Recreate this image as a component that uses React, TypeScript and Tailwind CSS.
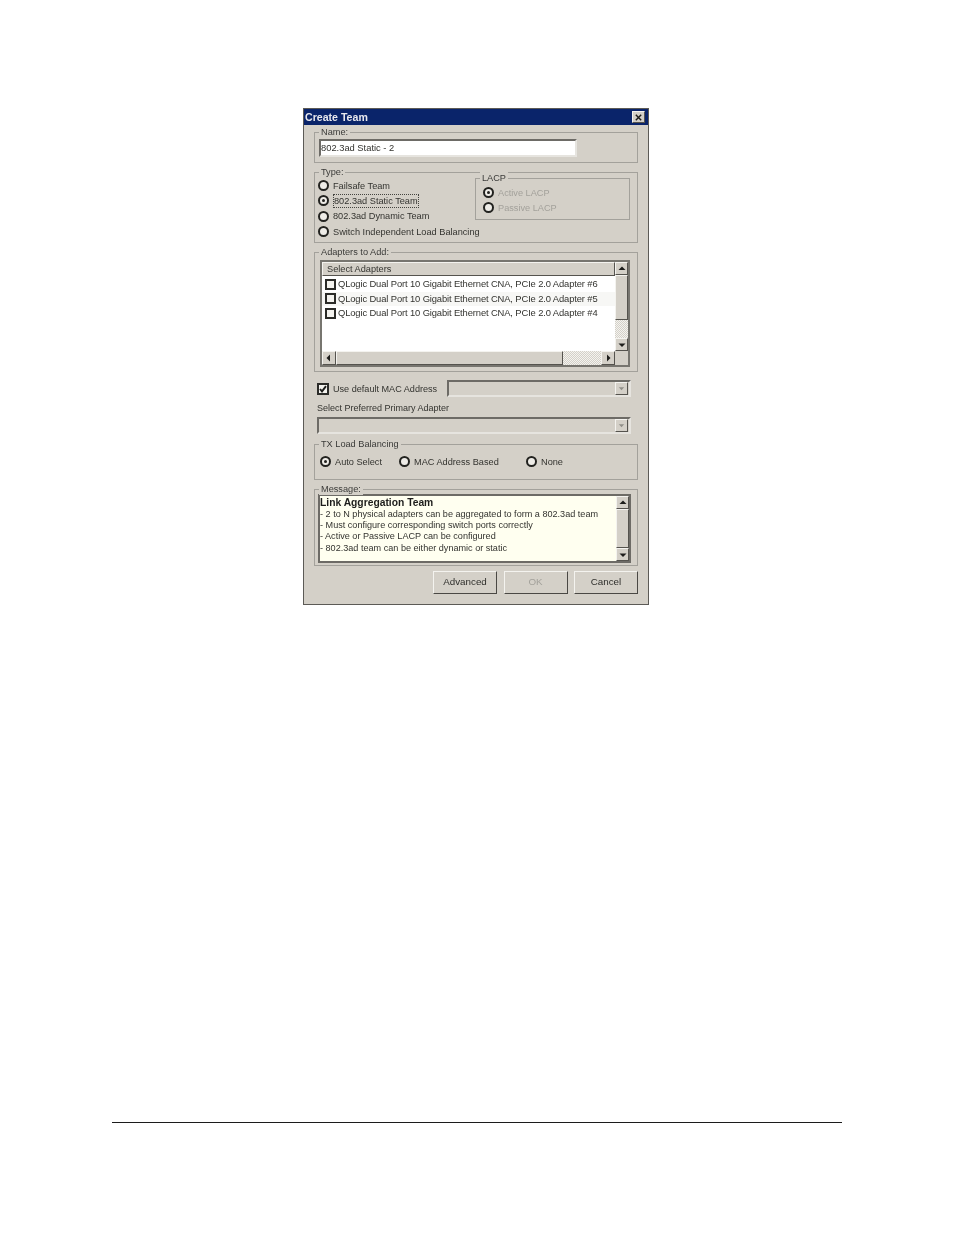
import { ReactNode } from "react";

const face = "bg-[#d4d0c8]";
const raised = "border border-t-[#f4f3ef] border-l-[#f4f3ef] border-r-[#55534e] border-b-[#55534e]";
const sunken = "border-2 border-t-[#6d6b66] border-l-[#6d6b66] border-r-[#e6e4df] border-b-[#e6e4df]";
const track = "bg-[repeating-conic-gradient(#d4d0c8_0_25%,#f4f3ef_0_50%)] bg-[length:2px_2px]";

function Group({ legend, className, children }: { legend: string; className: string; children: ReactNode }) {
  return (
    <section className={`relative border border-[#a3a19b] ${className}`}>
      <span className={`absolute left-[4px] top-[-7px] px-[2px] text-[9.2px] leading-[12px] text-[#3a3a38] ${face}`}>{legend}</span>
      {children}
    </section>
  );
}

function Radio({ label, checked, disabled, boxed }: { label: string; checked?: boolean; disabled?: boolean; boxed?: boolean }) {
  return (
    <div className="flex h-[15.3px] items-center gap-[4px]">
      <span className="flex h-[11px] w-[11px] shrink-0 items-center justify-center rounded-full border-2 border-[#22221f] bg-[#eeece7]">
        {checked ? <span className="h-[3px] w-[3px] rounded-full bg-[#22221f]" /> : null}
      </span>
      <span
        className={`whitespace-nowrap text-[9.2px] leading-[12px] ${disabled ? "text-[#a3a19b]" : "text-[#33332f]"} ${boxed ? "border border-dotted border-[#44443f]" : ""}`}
      >
        {label}
      </span>
    </div>
  );
}

function Arrow({ dir, className = "" }: { dir: "up" | "down" | "left" | "right"; className?: string }) {
  const points = {
    up: "1.5,6 8.5,6 5,2.5",
    down: "1.5,3.5 8.5,3.5 5,7",
    left: "6,1.5 6,8.5 2.5,5",
    right: "4,1.5 4,8.5 7.5,5"
  }[dir];
  return (
    <span className={`flex shrink-0 items-center justify-center ${face} ${raised} ${className}`}>
      <svg viewBox="0 0 10 10" className="h-[10px] w-[10px]">
        <polygon points={points} fill="#1d1d1b" />
      </svg>
    </span>
  );
}

function Combo({ className }: { className: string }) {
  return (
    <div className={`flex items-center justify-end pr-[1px] ${sunken} ${face} ${className}`}>
      <span className={`flex h-[13px] w-[13px] items-center justify-center ${raised}`}>
        <svg viewBox="0 0 10 10" className="h-[9px] w-[9px]">
          <polygon points="2,3.5 8,3.5 5,7" fill="#918f89" />
        </svg>
      </span>
    </div>
  );
}

function AdapterRow({ label, tint }: { label: string; tint?: boolean }) {
  return (
    <div className={`flex h-[14.5px] items-center gap-[2px] pl-[3px] ${tint ? "bg-[#f7f7f5]" : "bg-white"}`}>
      <span className="h-[11px] w-[11px] shrink-0 border-2 border-[#2b2b28] bg-[#f4f3ef]" />
      <span className="whitespace-nowrap text-[9.4px] leading-[12px] tracking-[-0.12px] text-[#33332f]">{label}</span>
    </div>
  );
}

function DialogButton({ label, disabled }: { label: string; disabled?: boolean }) {
  return (
    <button
      className={`h-[23px] w-[64px] border border-t-[#f4f3ef] border-l-[#f4f3ef] border-r-[#4a4844] border-b-[#4a4844] text-[9.8px] ${face} ${disabled ? "text-[#a3a19b]" : "text-[#2e2e2b]"}`}
    >
      {label}
    </button>
  );
}

export default function App() {
  return (
    <div className="flex h-[1235px] w-[954px] flex-col bg-white pt-[108px] font-['Liberation_Sans',Arial,sans-serif]">
      <div className={`ml-[303px] flex h-[497px] w-[346px] flex-col border border-[#5c5a56] blur-[0.4px] ${face}`}>
        <header className="flex h-[16px] items-center justify-between bg-[#0a246a] pl-[1px] pr-[3px]">
          <span className="text-[10.6px] font-bold leading-[12px] text-[#e8e8ee]">Create Team</span>
          <span className={`flex h-[12px] w-[13px] items-center justify-center ${face} ${raised}`}>
            <svg viewBox="0 0 10 10" className="h-[9px] w-[9px]">
              <path d="M2 2 L8 8 M8 2 L2 8" stroke="#1d1d1b" strokeWidth="1.6" />
            </svg>
          </span>
        </header>

        <div className="flex flex-col px-[10px] pt-[7px]">
          <Group legend="Name:" className="h-[31px] pl-[4px] pt-[6px]">
            <div className={`flex h-[18px] w-[258px] items-center bg-white ${sunken}`}>
              <span className="text-[9.35px] leading-[12px] text-[#33332f]">802.3ad Static - 2</span>
            </div>
          </Group>

          <Group legend="Type:" className="mt-[9px] flex h-[71px] justify-between pl-[3px] pr-[7px] pt-[1px]">
            <div className="flex w-[150px] shrink-0 flex-col pt-[4px]">
              <Radio label="Failsafe Team" />
              <Radio label="802.3ad Static Team" checked boxed />
              <Radio label="802.3ad Dynamic Team" />
              <Radio label="Switch Independent Load Balancing" />
            </div>
            <Group legend="LACP" className="mt-[4px] h-[42px] w-[155px] shrink-0 pl-[7px] pt-[6px]">
              <Radio label="Active LACP" checked disabled />
              <Radio label="Passive LACP" disabled />
            </Group>
          </Group>

          <Group legend="Adapters to Add:" className="mt-[9px] h-[120px] pl-[5px] pt-[7px]">
            <div className="flex h-[107px] w-[310px] flex-col border-2 border-[#77756f] bg-white">
              <div className="flex min-h-0 flex-1">
                <div className="flex min-w-0 flex-1 flex-col">
                  <div className={`flex h-[14px] items-center pl-[4px] text-[9.2px] leading-[12px] text-[#33332f] ${face} ${raised}`}>
                    Select Adapters
                  </div>
                  <div className="pt-[1px]">
                    <AdapterRow label="QLogic Dual Port 10 Gigabit Ethernet CNA, PCIe 2.0 Adapter #6" />
                    <AdapterRow label="QLogic Dual Port 10 Gigabit Ethernet CNA, PCIe 2.0 Adapter #5" tint />
                    <AdapterRow label="QLogic Dual Port 10 Gigabit Ethernet CNA, PCIe 2.0 Adapter #4" />
                  </div>
                </div>
                <div className="flex w-[13px] shrink-0 flex-col">
                  <Arrow dir="up" className="h-[13px]" />
                  <div className={`h-[45px] shrink-0 ${face} ${raised}`} />
                  <div className={`flex-1 ${track}`} />
                  <Arrow dir="down" className="h-[13px]" />
                </div>
              </div>
              <div className="flex h-[14px] shrink-0">
                <Arrow dir="left" className="w-[14px]" />
                <div className={`w-[227px] ${face} ${raised}`} />
                <div className={`flex-1 ${track}`} />
                <Arrow dir="right" className="w-[14px]" />
                <div className={`w-[13px] ${face}`} />
              </div>
            </div>
          </Group>

          <div className="mt-[8px] flex h-[17px] items-center pl-[3px]">
            <span className="flex h-[12px] w-[12px] shrink-0 items-center justify-center border-2 border-[#2b2b28] bg-[#f4f3ef]">
              <svg viewBox="0 0 8 8" className="h-[8px] w-[8px]">
                <path d="M1 4 L3 6.4 L7 1.2" fill="none" stroke="#1d1d1b" strokeWidth="1.9" />
              </svg>
            </span>
            <span className="ml-[4px] w-[114px] whitespace-nowrap text-[9.1px] leading-[12px] text-[#33332f]">Use default MAC Address</span>
            <Combo className="h-[17px] w-[184px]" />
          </div>
          <div className="mt-[5px] h-[12px] pl-[3px] text-[9px] leading-[12px] text-[#33332f]">Select Preferred Primary Adapter</div>
          <Combo className="ml-[3px] mt-[3px] h-[17px] w-[314px]" />

          <Group legend="TX Load Balancing" className="mt-[10px] flex h-[36px] items-center pl-[5px]">
            <div className="w-[79px]">
              <Radio label="Auto Select" checked />
            </div>
            <div className="w-[127px]">
              <Radio label="MAC Address Based" />
            </div>
            <Radio label="None" />
          </Group>

          <Group legend="Message:" className="mt-[9px] h-[77px] pl-[3px] pt-[4px]">
            <div className="flex h-[69px] w-[313px] border-2 border-[#6d6b66] bg-[#fffff0]">
              <div className="min-w-0 flex-1 pt-[1px] text-[9.1px] leading-[11.2px] text-[#33332f]">
                <p className="text-[10.3px] font-bold leading-[12px] text-[#1d1d1b]">Link Aggregation Team</p>
                <p>- 2 to N physical adapters can be aggregated to form a 802.3ad team</p>
                <p>- Must configure corresponding switch ports correctly</p>
                <p>- Active or Passive LACP can be configured</p>
                <p>- 802.3ad team can be either dynamic or static</p>
              </div>
              <div className="flex w-[13px] shrink-0 flex-col">
                <Arrow dir="up" className="h-[13px]" />
                <div className={`flex-1 ${face} ${raised}`} />
                <Arrow dir="down" className="h-[13px]" />
              </div>
            </div>
          </Group>

          <div className="mt-[5px] flex justify-end gap-[6.5px]">
            <DialogButton label="Advanced" />
            <DialogButton label="OK" disabled />
            <DialogButton label="Cancel" />
          </div>
        </div>
      </div>

      <div className="mx-[112px] mt-[517px] h-px bg-[#1c1c1c]" />
    </div>
  );
}
